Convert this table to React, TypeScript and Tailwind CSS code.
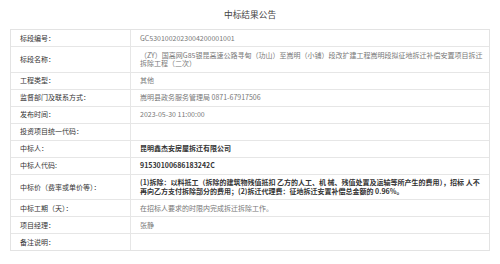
const ROWS: { label: string; value: string; strong?: boolean }[] = [
  { label: '标段编号：', value: 'GC5301002023004200001001' },
  { label: '标段名称：', value: '（ZY）国高网G85银昆高速公路寻甸（功山）至嵩明（小铺）段改扩建工程嵩明段拟征地拆迁补偿安置项目拆迁拆除工程（二次）' },
  { label: '工程类型：', value: '其他' },
  { label: '监督部门及联系方式：', value: '嵩明县政务服务管理局 0871-67917506' },
  { label: '发布时间：', value: '2023-05-30 11:00:00' },
  { label: '投资项目统一代码：', value: '' },
  { label: '中标人：', value: '昆明鑫杰安房屋拆迁有限公司', strong: true },
  { label: '中标人代码:', value: '91530100686183242C', strong: true },
  {
    label: '中标价（费率或单价等）：',
    value: '(1)拆除：以料抵工（拆除的建筑物残值抵扣 乙方的人工、机 械、残值处置及运输等所产生的费用），招标 人不再向乙方支付拆除部分的费用；(2)拆迁代理费：征地拆迁安置补偿总金额的 0.96%。',
    strong: true,
  },
  { label: '中标工期（天）：', value: '在招标人要求的时限内完成拆迁拆除工作。' },
  { label: '项目经理：', value: '张静' },
  { label: '备注说明：', value: '' },
];

export default function App() {
  return (
    <div className="w-[500px] h-[264px] bg-white overflow-hidden font-['Noto_Sans_CJK_SC','Liberation_Sans',sans-serif]">
      <h1 className="pt-[10px] h-[29px] text-center text-[8.7px] leading-[10px] text-[#444]">中标结果公告</h1>

      {/* announcement table */}
      <div className="mx-[10px] border border-[#e3e3e3] text-[7px] leading-[8.6px]">
        {ROWS.map((r, i) => (
          <div key={r.label} className={`flex ${i < ROWS.length - 1 ? 'border-b border-[#e6e6e6]' : ''}`}>
            <div className="w-[120px] shrink-0 pl-[9px] flex items-center text-[#333] border-r border-[#e6e6e6]">{r.label}</div>
            <div className={`flex-1 min-h-[16px] pl-[9px] pr-[3px] py-[3.7px] flex items-center ${r.strong ? 'font-bold text-[#333]' : 'text-[#777]'}`}>
              <span>{r.value}</span>
            </div>
          </div>
        ))}
      </div>
    </div>
  );
}
